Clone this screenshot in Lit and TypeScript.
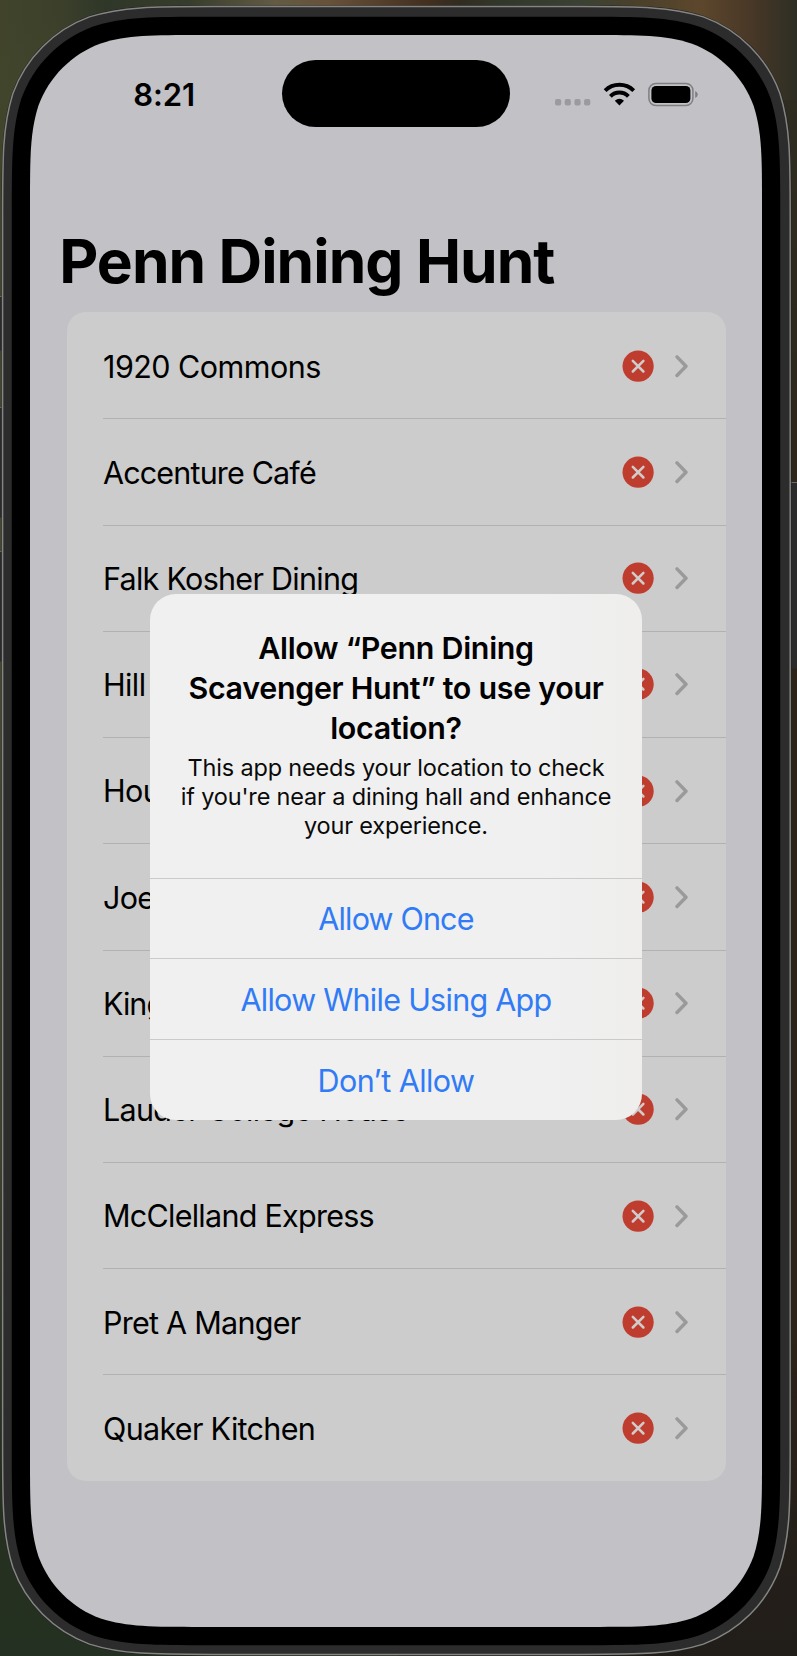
import { LitElement, html, css, svg } from "lit";
import { customElement, property } from "lit/decorators.js";
import { styleMap } from "lit/directives/style-map.js";

interface Label {
  name: string;
  tracking: number;
}

const HALLS: Label[] = [
  { name: "1920 Commons", tracking: -0.53 },
  { name: "Accenture Café", tracking: -0.84 },
  { name: "Falk Kosher Dining", tracking: -0.72 },
  { name: "Hill House", tracking: -0.6 },
  { name: "Houston Market", tracking: -0.6 },
  { name: "Joe's Café", tracking: -0.68 },
  { name: "Kings Court English House", tracking: -1 },
  { name: "Lauder College House", tracking: -0.72 },
  { name: "McClelland Express", tracking: -0.74 },
  { name: "Pret A Manger", tracking: -0.74 },
  { name: "Quaker Kitchen", tracking: -0.68 },
];

const ACTIONS: Label[] = [
  { name: "Allow Once", tracking: -0.84 },
  { name: "Allow While Using App", tracking: -0.72 },
  { name: "Don’t Allow", tracking: -0.58 },
];

/** Rounded rectangle with continuous-curvature corners. */
function continuousRect(x: number, y: number, w: number, h: number, r: number): string {
  const a = 1.52866 * r, b = 1.08849 * r, c = 0.86841 * r, d = 0.63149 * r;
  const e = 0.07491 * r, f = 0.37282 * r, g = 0.16906 * r;
  const X = x + w, Y = y + h;
  return [
    `M${x + a} ${y}H${X - a}`,
    `C${X - b} ${y} ${X - c} ${y} ${X - d} ${y + e}`,
    `C${X - f} ${y + g} ${X - g} ${y + f} ${X - e} ${y + d}`,
    `C${X} ${y + c} ${X} ${y + b} ${X} ${y + a}V${Y - a}`,
    `C${X} ${Y - b} ${X} ${Y - c} ${X - e} ${Y - d}`,
    `C${X - g} ${Y - f} ${X - f} ${Y - g} ${X - d} ${Y - e}`,
    `C${X - c} ${Y} ${X - b} ${Y} ${X - a} ${Y}H${x + a}`,
    `C${x + b} ${Y} ${x + c} ${Y} ${x + d} ${Y - e}`,
    `C${x + f} ${Y - g} ${x + g} ${Y - f} ${x + e} ${Y - d}`,
    `C${x} ${Y - c} ${x} ${Y - b} ${x} ${Y - a}V${y + a}`,
    `C${x} ${y + b} ${x} ${y + c} ${x + e} ${y + d}`,
    `C${x + g} ${y + f} ${x + f} ${y + g} ${x + d} ${y + e}`,
    `C${x + c} ${y} ${x + b} ${y} ${x + a} ${y}Z`,
  ].join("");
}

@customElement("status-bar")
class StatusBar extends LitElement {
  static styles = css`
    :host {
      display: grid;
      grid-template-columns: 1fr 228.5px 1fr;
      align-items: center;
      height: 117.5px;
    }
    .time {
      padding: 2.5px 0 0 16.5px;
      text-align: center;
      font-size: 31px;
      font-weight: 580;
      line-height: 38px;
      letter-spacing: -0.1px;
    }
    .island {
      height: 67px;
      border-radius: 34px;
      background: #000;
    }
    .icons {
      padding-left: 44.7px;
      display: flex;
    }
  `;
  render() {
    return html`
      <div class="time">8:21</div>
      <div class="island"></div>
      <div class="icons">
        <svg width="144" height="26" viewBox="0 0 144 26">
          ${[0, 9.7, 19.4, 29.1].map(
            (x) => svg`<rect x=${x} y="18" width="6.2" height="6.4" rx="1.9" fill="#9b9b9e"/>`
          )}
          <g fill="none" stroke="#000" stroke-width="4">
            <path d="M50.1 9.6A20.5 20.5 0 0 1 78.7 9.6"/>
            <path d="M55.4 15.3A12.8 12.8 0 0 1 73.4 15.3"/>
          </g>
          <path d="M64.4 24.6L59.8 19.8Q64.4 15.6 69 19.8Z" fill="#000"/>
          <rect x="93.9" y="2.4" width="44" height="22.2" rx="7" fill="none" stroke="#7f7f82" stroke-width="1.5"/>
          <rect x="96.4" y="5" width="39" height="17" rx="4.6" fill="#000"/>
          <path d="M140.2 10.1Q142.8 11.3 142.8 13.5T140.2 16.9Z" fill="#7f7f82"/>
        </svg>
      </div>
    `;
  }
}

@customElement("hall-row")
class HallRow extends LitElement {
  static styles = css`
    :host {
      display: flex;
      flex: 1;
      margin-left: 36.5px;
      padding-right: 36.6px;
      align-items: center;
      border-top: 1px solid #b1b1b3;
      box-sizing: border-box;
    }
    :host(:first-child) {
      border-top-color: transparent;
    }
    .name {
      flex: 1;
      padding-top: 1.6px;
      white-space: nowrap;
      font-size: 30.5px;
      line-height: 38px;
    }
    .mark {
      margin-right: 21px;
    }
    svg {
      display: block;
    }
  `;
  @property({ attribute: false }) hall!: Label;
  render() {
    return html`
      <span class="name" style=${styleMap({ letterSpacing: `${this.hall.tracking}px` })}>${this.hall.name}</span>
      <svg class="mark" width="32" height="32" viewBox="0 0 32 32">
        <circle cx="16.1" cy="16.2" r="15.6" fill="#bf3d2f"/>
        <path d="M10.8 10.9L21.4 21.5M21.4 10.9L10.8 21.5" stroke="#d0cccb" stroke-width="2.5" stroke-linecap="round"/>
      </svg>
      <svg width="14" height="24" viewBox="0 0 14 24">
        <path d="M2 2.9L11 12.2L2 21.5" fill="none" stroke="#9a9a9b" stroke-width="3.4" stroke-linecap="round" stroke-linejoin="round"/>
      </svg>
    `;
  }
}

@customElement("location-alert")
class LocationAlert extends LitElement {
  static styles = css`
    :host {
      display: block;
      width: 491.4px;
      height: 526px;
      border-radius: 26px;
      overflow: hidden;
      background: linear-gradient(90deg, #f0f0f0 80%, #efeeed);
      text-align: center;
    }
    .head {
      height: 284px;
      padding-top: 34.7px;
      box-sizing: border-box;
    }
    .title {
      margin: 0;
      font-size: 30.4px;
      font-weight: 600;
      line-height: 40px;
      letter-spacing: -0.29px;
    }
    .message {
      margin: 4.6px 0 0;
      font-size: 23.5px;
      line-height: 29.2px;
      letter-spacing: -0.17px;
      color: #0a0a0a;
    }
    .action {
      display: block;
      width: 100%;
      height: 80.7px;
      padding: 0.6px 0 0;
      border: 0;
      border-top: 1px solid #cacacb;
      background: none;
      color: #307bf6;
      font: 400 30.5px Inter, sans-serif;
    }
  `;
  render() {
    return html`
      <div class="head">
        <h2 class="title">Allow “Penn Dining<br />Scavenger Hunt” to use your<br />location?</h2>
        <p class="message">
          This app needs your location to check<br />if you're near a dining hall and enhance<br />your experience.
        </p>
      </div>
      ${ACTIONS.map(
        (a) => html`<button class="action" style=${styleMap({ letterSpacing: `${a.tracking}px` })}>${a.name}</button>`
      )}
    `;
  }
}

@customElement("app-root")
class AppRoot extends LitElement {
  static styles = css`
    :host {
      display: block;
      position: relative;
      width: 797px;
      height: 1656px;
      overflow: hidden;
      box-sizing: border-box;
      padding: 35px 35px 29px 30px;
      font-family: Inter, "Noto Sans", sans-serif;
      color: #000;
      background:
        linear-gradient(180deg, transparent 20px, #41452c 100px) 0 0 / 60px 100px no-repeat,
        linear-gradient(90deg, #41442b 0, #3c402b 60px, #2f3728 105px, #373d2c 190px, #635b44 275px, #67513a 330px, #44301f 425px, #302c20 460px, #323829 500px, #3b4233 580px, #4b402b 640px, #5d472c 700px, #493827 750px, #2d2e24 797px) 0 0 / 797px 100px no-repeat,
        linear-gradient(180deg, #40442b, #474830 40%, #3e4229 70%, #26301f 88%, #243021) 0 0 / 398px 1656px no-repeat,
        linear-gradient(180deg, #2f2d23, #2c2419 40%, #2c231a 80%, #211d19) 398px 0 / 399px 1656px no-repeat;
    }
    .bezel {
      position: absolute;
      inset: 0;
    }
    .screen {
      position: relative;
      height: 1592px;
      display: flex;
      flex-direction: column;
    }
    .heading {
      margin: 71.6px 0 0 29.2px;
      font-size: 60.4px;
      font-weight: 700;
      line-height: 74px;
      letter-spacing: -0.95px;
      white-space: nowrap;
    }
    .card {
      margin: 14px 36.4px 0 36.5px;
      height: 1168.6px;
      display: flex;
      flex-direction: column;
      border-radius: 19px;
      background: #ccc;
    }
    .alert {
      position: absolute;
      left: 120.3px;
      top: 558.7px;
    }
  `;
  render() {
    return html`
      <svg class="bezel" width="797" height="1656" viewBox="0 0 797 1656">
        <g fill="#2b2b2b">
          <rect x="-2" y="296.5" width="6" height="54"/>
          <rect x="-2" y="407.5" width="6" height="110"/>
          <rect x="-2" y="551.5" width="6" height="110"/>
          <rect x="789" y="482.5" width="12" height="186"/>
        </g>
        <path d="M0 296.5H3M0 407.5H3M0 551.5H3M790 482.5H797" stroke="#6a6a68" stroke-width="1.2"/>
        <path d=${continuousRect(1.5, 5.5, 790, 1650, 138.5)} fill="#222"/>
        <path d=${continuousRect(2.6, 6.6, 787.6, 1647.8, 137.5)} fill="#2c2c2c" stroke="#858583" stroke-width="1.5"/>
        <path d=${continuousRect(11.8, 16.8, 768.4, 1628.4, 129)} fill="#000"/>
        <path d=${continuousRect(30, 35, 732, 1592, 112)} fill="#c2c1c6"/>
      </svg>
      <main class="screen">
        <status-bar></status-bar>
        <h1 class="heading">Penn Dining Hunt</h1>
        <div class="card">${HALLS.map((h) => html`<hall-row .hall=${h}></hall-row>`)}</div>
        <location-alert class="alert"></location-alert>
      </main>
    `;
  }
}
